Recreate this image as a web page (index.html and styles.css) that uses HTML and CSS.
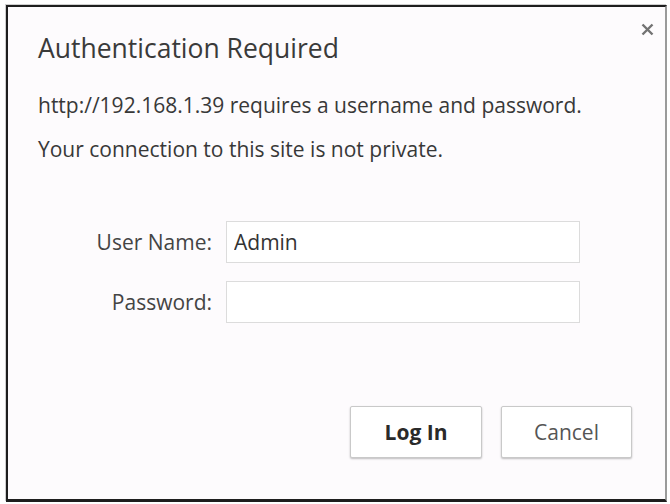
FILE: index.html
```html
<!DOCTYPE html>
<html lang="en">
<head>
<meta charset="utf-8">
<title>Authentication Required</title>
<link rel="stylesheet" href="styles.css">
</head>
<body>
<div class="dialog" role="dialog" aria-labelledby="auth-title">
  <button class="close" type="button" aria-label="Close">
    <svg viewBox="0 0 13 13" width="13" height="13" aria-hidden="true">
      <path d="M1.5 1.5 L11.5 11.5 M11.5 1.5 L1.5 11.5" stroke="currentColor" stroke-width="2.4" stroke-linecap="butt" fill="none"/>
    </svg>
  </button>
  <h1 class="title" id="auth-title">Authentication Required</h1>
  <p class="msg msg-first">http://192.168.1.39 requires a username and password.</p>
  <p class="msg">Your connection to this site is not private.</p>
  <form class="fields">
    <label class="field-label" for="user">User Name:</label>
    <input class="field-input" id="user" type="text" value="Admin">
    <label class="field-label" for="pass">Password:</label>
    <input class="field-input" id="pass" type="password">
  </form>
  <div class="actions">
    <button class="btn btn-primary" type="button">Log In</button>
    <button class="btn" type="button">Cancel</button>
  </div>
</div>
</body>
</html>
```
FILE: styles.css
```css
html, body {
  margin: 0;
  padding: 0;
  background: #ffffff;
}

body {
  font-family: "Open Sans", "Noto Sans", "DejaVu Sans", sans-serif;
  color: #333333;
}

.dialog {
  position: relative;
  box-sizing: border-box;
  width: 661px;
  height: 497px;
  margin: 5px 0 0 6px;
  padding: 25px 30px 0 30px;
  background: #fdfbfd;
  border-top: 2px solid #1e1e1e;
  border-left: 2px solid #1e1e1e;
  border-bottom: 3px solid #1e1e1e;
  border-right: 2px solid #9a9a9a;
  box-shadow: -1px -1px 0 #cfcfcf;
}

.close {
  position: absolute;
  top: 12px;
  right: 8px;
  width: 20px;
  height: 20px;
  padding: 0;
  border: 0;
  background: transparent;
  color: #737373;
  display: flex;
  align-items: center;
  justify-content: center;
}

.title {
  margin: 0;
  font-size: 26.5px;
  line-height: 32px;
  font-weight: 400;
  color: #3a3a3a;
}

.msg {
  margin: 18px 0 0 0;
  font-size: 21px;
  line-height: 26px;
  color: #383838;
}

.msg-first {
  margin-top: 28px;
}

.fields {
  display: grid;
  grid-template-columns: 174px 354px;
  column-gap: 14px;
  row-gap: 18px;
  align-items: center;
  margin-top: 59px;
}

.field-label {
  text-align: right;
  font-size: 21px;
  color: #444444;
}

.field-input {
  box-sizing: border-box;
  height: 42px;
  margin: 0;
  padding: 0 7px;
  border: 1px solid #dcdcdc;
  background: #ffffff;
  font-family: inherit;
  font-size: 21px;
  color: #333333;
  outline: none;
}

.actions {
  display: flex;
  justify-content: flex-end;
  gap: 19px;
  margin-top: 83px;
  padding-right: 3px;
}

.btn {
  box-sizing: border-box;
  width: 131px;
  height: 52px;
  margin: 0;
  border: 1px solid #c9c9c9;
  border-radius: 2px;
  background: #ffffff;
  box-shadow: 0 1px 2px rgba(0, 0, 0, 0.25);
  font-family: inherit;
  font-size: 21px;
  color: #555555;
}

.btn-primary {
  width: 132px;
  font-weight: 700;
  color: #2a2a2a;
}
```
